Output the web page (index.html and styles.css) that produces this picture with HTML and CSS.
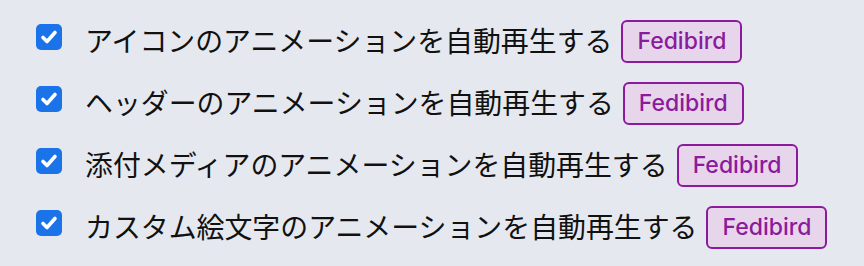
FILE: index.html
```html
<!DOCTYPE html>
<html lang="ja">
<head>
<meta charset="utf-8">
<link rel="stylesheet" href="styles.css">
</head>
<body>
<ul class="list">
  <li class="row">
    <span class="check"><svg viewBox="0 0 26 26" width="26" height="26"><path d="M7 13.5 L11 17.5 L19 8.5" fill="none" stroke="#fff" stroke-width="3.6" stroke-linecap="round" stroke-linejoin="round"/></svg></span>
    <span class="label">アイコンのアニメーションを自動再生する</span>
    <span class="badge">Fedibird</span>
  </li>
  <li class="row">
    <span class="check"><svg viewBox="0 0 26 26" width="26" height="26"><path d="M7 13.5 L11 17.5 L19 8.5" fill="none" stroke="#fff" stroke-width="3.6" stroke-linecap="round" stroke-linejoin="round"/></svg></span>
    <span class="label">ヘッダーのアニメーションを自動再生する</span>
    <span class="badge">Fedibird</span>
  </li>
  <li class="row">
    <span class="check"><svg viewBox="0 0 26 26" width="26" height="26"><path d="M7 13.5 L11 17.5 L19 8.5" fill="none" stroke="#fff" stroke-width="3.6" stroke-linecap="round" stroke-linejoin="round"/></svg></span>
    <span class="label">添付メディアのアニメーションを自動再生する</span>
    <span class="badge">Fedibird</span>
  </li>
  <li class="row">
    <span class="check"><svg viewBox="0 0 26 26" width="26" height="26"><path d="M7 13.5 L11 17.5 L19 8.5" fill="none" stroke="#fff" stroke-width="3.6" stroke-linecap="round" stroke-linejoin="round"/></svg></span>
    <span class="label">カスタム絵文字のアニメーションを自動再生する</span>
    <span class="badge">Fedibird</span>
  </li>
</ul>
</body>
</html>
```
FILE: styles.css
```css
html, body {
  margin: 0;
  padding: 0;
  background: #e5e9ef;
}
.list {
  list-style: none;
  margin: 0;
  padding: 10px 0 0 36px;
  display: flex;
  flex-direction: column;
}
.row {
  display: flex;
  align-items: center;
  height: 62px;
}
.check {
  width: 26px;
  height: 26px;
  border-radius: 5px;
  background: #1a73e8;
  display: flex;
  flex-shrink: 0;
  margin-right: 23px;
  margin-top: -8px;
}
.check svg {
  display: block;
}
.label {
  font-family: "Noto Sans CJK JP", "Noto Sans", sans-serif;
  font-size: 27.9px;
  color: #111;
  white-space: nowrap;
  line-height: 1;
}
.badge {
  margin-left: 9px;
  box-sizing: border-box;
  height: 43px;
  padding: 0 14px;
  display: flex;
  align-items: center;
  border: 2px solid #8c1a9c;
  border-radius: 6px;
  background: #e7d6eb;
  color: #8c1a9c;
  font-family: "Inter", "Liberation Sans", sans-serif;
  font-weight: 500;
  font-size: 23px;
  white-space: nowrap;
}
```
